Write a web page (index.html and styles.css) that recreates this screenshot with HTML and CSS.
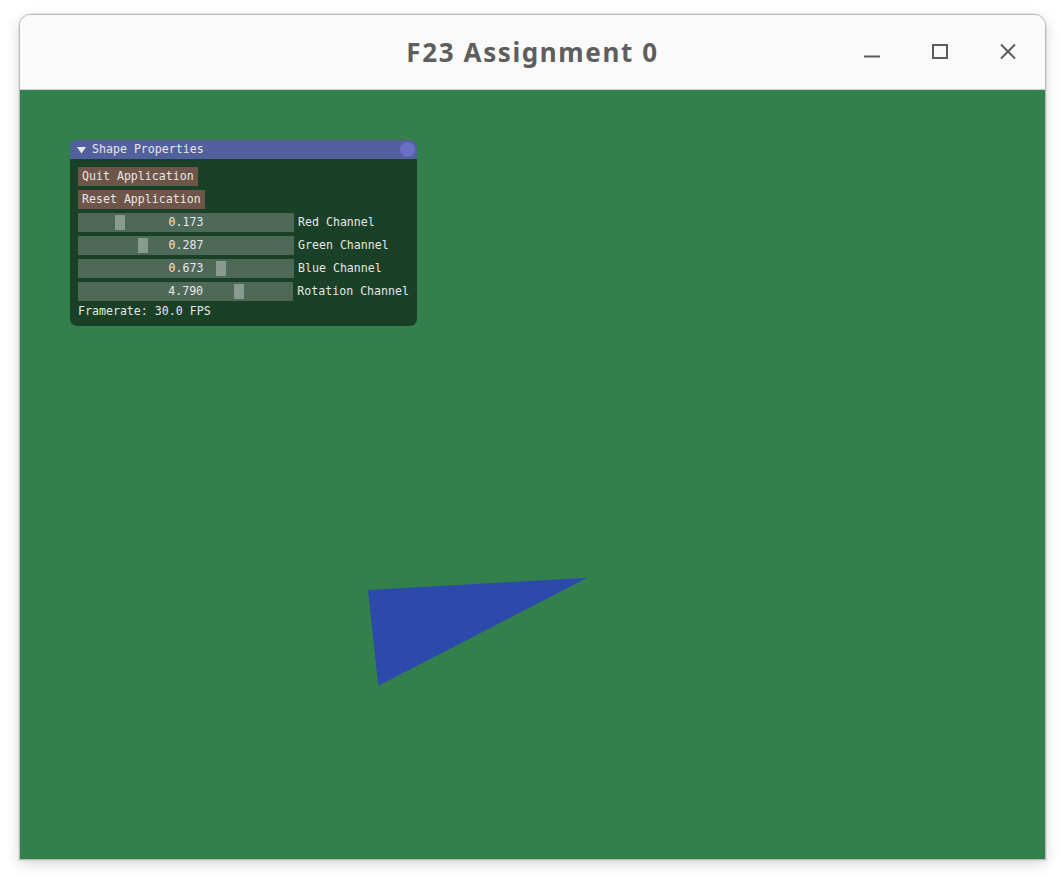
FILE: index.html
```html
<!DOCTYPE html>
<html>
<head>
<meta charset="utf-8">
<title>F23 Assignment 0</title>
<link rel="stylesheet" href="styles.css">
</head>
<body>
<div class="window">
  <header class="titlebar">
    <div class="title">F23 Assignment 0</div>
    <div class="controls">
      <svg class="ctl" width="18" height="18" viewBox="0 0 18 18"><line x1="1" y1="13.5" x2="17" y2="13.5" stroke="#5c5c5c" stroke-width="2"/></svg>
      <svg class="ctl" width="18" height="18" viewBox="0 0 18 18"><rect x="2" y="2" width="14" height="13" fill="none" stroke="#5c5c5c" stroke-width="2"/></svg>
      <svg class="ctl" width="18" height="18" viewBox="0 0 18 18"><path d="M2 1.5 L16 15.5 M16 1.5 L2 15.5" stroke="#5c5c5c" stroke-width="2" fill="none"/></svg>
    </div>
  </header>
  <main class="canvas">
    <svg class="scene" width="1024" height="768" viewBox="0 0 1024 768">
      <polygon points="348,500 567.3,487.7 358.3,595.7" fill="#2c49ac"/>
    </svg>
    <section class="panel">
      <div class="panel-title">
        <svg class="arrow" width="9" height="8" viewBox="0 0 9 8"><polygon points="0,1 9,1 4.5,7.5" fill="#e6e6e6"/></svg>
        <span class="panel-name">Shape Properties</span>
        <span class="dot"></span>
      </div>
      <div class="panel-body">
        <div class="btn-row"><span class="btn">Quit Application</span></div>
        <div class="btn-row"><span class="btn">Reset Application</span></div>
        <div class="slider-row">
          <div class="slider"><span class="grab" style="left:37px"></span><span class="value">0.173</span></div>
          <span class="label">Red Channel</span>
        </div>
        <div class="slider-row">
          <div class="slider"><span class="grab" style="left:60px"></span><span class="value">0.287</span></div>
          <span class="label">Green Channel</span>
        </div>
        <div class="slider-row">
          <div class="slider"><span class="grab" style="left:138px"></span><span class="value">0.673</span></div>
          <span class="label">Blue Channel</span>
        </div>
        <div class="slider-row">
          <div class="slider"><span class="grab" style="left:156px"></span><span class="value">4.790</span></div>
          <span class="label">Rotation Channel</span>
        </div>
        <div class="fps">Framerate: 30.0 FPS</div>
      </div>
    </section>
  </main>
</div>
</body>
</html>
```
FILE: styles.css
```css
html, body {
  margin: 0;
  padding: 0;
  background: #ffffff;
}
body {
  width: 1064px;
  height: 878px;
  overflow: hidden;
}
.window {
  margin: 14px 0 0 19px;
  width: 1027px;
  height: 846px;
  box-sizing: border-box;
  border: 1px solid #b9b9b9;
  border-radius: 12px 12px 0 0;
  box-shadow: 0 0 0 1px rgba(0,0,0,0.06), 0 4px 14px rgba(0,0,0,0.16);
  display: flex;
  flex-direction: column;
  overflow: hidden;
  background: #fafafa;
}
.titlebar {
  position: relative;
  height: 75px;
  flex: 0 0 75px;
  box-sizing: border-box;
  background: #fafafa;
  border-bottom: 1px solid #cfcfcf;
  display: flex;
  align-items: center;
  justify-content: center;
}
.title {
  font-family: "Noto Sans", "DejaVu Sans", sans-serif;
  font-weight: 700;
  font-size: 26px;
  letter-spacing: 1.6px;
  color: #5e5e5e;
  margin-top: 0px;
}
.controls {
  position: absolute;
  right: 28px;
  top: 28px;
  display: flex;
  gap: 50px;
}
.ctl {
  display: block;
}
.canvas {
  position: relative;
  flex: 1;
  background: #33804d;
  overflow: hidden;
}
.scene {
  position: absolute;
  left: 0;
  top: 0;
}
.panel {
  position: absolute;
  left: 50px;
  top: 50px;
  width: 347px;
  font-family: "DejaVu Sans Mono", "Liberation Mono", monospace;
  font-size: 11.6px;
  line-height: 13px;
  color: #e6e6e6;
}
.panel-title {
  height: 19px;
  background: #52609e;
  border-radius: 7px 7px 0 0;
  display: flex;
  align-items: center;
  padding-left: 7px;
}
.arrow {
  display: block;
}
.panel-name {
  margin-left: 6px;
}
.dot {
  width: 15px;
  height: 15px;
  border-radius: 50%;
  background: #6a6fc6;
  margin-left: auto;
  margin-right: 2px;
}
.panel-body {
  background: #1a4027;
  border-radius: 0 0 7px 7px;
  padding: 8px;
  display: flex;
  flex-direction: column;
  gap: 4px;
}
.btn-row {
  display: flex;
}
.btn {
  background: #6e5549;
  height: 19px;
  line-height: 19px;
  padding: 0 4px;
  white-space: pre;
}
.slider-row {
  display: flex;
  align-items: center;
  gap: 4px;
}
.slider {
  position: relative;
  width: 216px;
  height: 19px;
  background: #4f6959;
  display: flex;
  align-items: center;
  justify-content: center;
}
.grab {
  position: absolute;
  top: 2px;
  width: 10px;
  height: 15px;
  background: #879c8e;
}
.value {
  position: relative;
  line-height: 19px;
}
.label {
  white-space: pre;
}
.fps {
  height: 13px;
  white-space: pre;
}
```
